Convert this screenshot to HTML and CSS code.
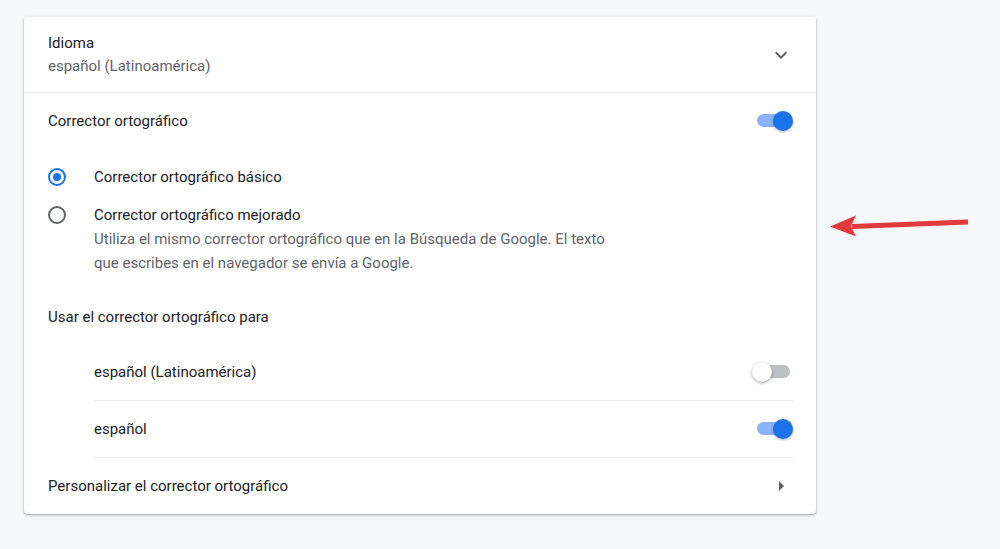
FILE: index.html
```html
<!DOCTYPE html>
<html lang="es">
<head>
  <meta charset="UTF-8" />
  <meta name="viewport" content="width=device-width, initial-scale=1.0"/>
  <title>Idiomas</title>
  <link rel="stylesheet" href="styles.css">
</head>
<body>
  <div class="card">
    <div class="row lang-row">
      <div class="lang-text">
        <div class="label">Idioma</div>
        <div class="sub">español (Latinoamérica)</div>
      </div>
      <svg class="icon" viewBox="0 0 24 24" width="24" height="24"><path d="M16.59 8.59L12 13.17 7.41 8.59 6 10l6 6 6-6z"/></svg>
    </div>

    <div class="row spell-row">
      <div class="label">Corrector ortográfico</div>
      <span class="toggle on"><span class="track"></span><span class="knob"></span></span>
    </div>

    <div class="radios">
      <div class="radio-row first">
        <span class="radio checked"></span>
        <div class="label">Corrector ortográfico básico</div>
      </div>
      <div class="radio-row">
        <span class="radio"></span>
        <div>
          <div class="label">Corrector ortográfico mejorado</div>
          <div class="sub">Utiliza el mismo corrector ortográfico que en la Búsqueda de Google. El texto<br>que escribes en el navegador se envía a Google.</div>
        </div>
      </div>
    </div>

    <div class="row">
      <div class="label">Usar el corrector ortográfico para</div>
    </div>

    <div class="sub-list">
      <div class="row item">
        <div class="label">español (Latinoamérica)</div>
        <span class="toggle"><span class="track"></span><span class="knob"></span></span>
      </div>
      <div class="row item">
        <div class="label">español</div>
        <span class="toggle on"><span class="track"></span><span class="knob"></span></span>
      </div>
    </div>

    <div class="row last">
      <div class="label">Personalizar el corrector ortográfico</div>
      <svg class="icon" viewBox="0 0 24 24" width="24" height="24"><path d="M10 17l5-5-5-5v10z"/></svg>
    </div>
  </div>

  <!-- annotation arrow drawn over the page -->
  <svg class="pointer" width="160" height="40" viewBox="820 205 160 40">
    <path d="M852 226.5 L968 222" stroke="#e03a3a" stroke-width="5" fill="none"/>
    <polygon points="830,226.5 856,215.5 851,226.3 856,236.5" fill="#e03a3a"/>
  </svg>
</body>
</html>
```

FILE: styles.css
```css
body { margin: 0; padding: 17px 0 0 24px; background: #f7f8fa; font-family: Roboto, "Liberation Sans", sans-serif; font-size: 15px; color: #202124; height: 549px; box-sizing: border-box; }
.card { width: 792px; background: #fff; border-radius: 4px; box-shadow: 0 1px 2px rgba(60,64,67,.3), 0 1px 3px 1px rgba(60,64,67,.15); padding: 0 23px 0 24px; box-sizing: border-box; }
.row { display: flex; align-items: center; justify-content: space-between; height: 55px; }
.lang-row { height: 75px; border-bottom: 1px solid #e8eaed; margin: 0 -23px 0 -24px; padding: 0 23px 0 24px; }
.lang-text .sub { margin-top: -1px; }
.label { line-height: 24px; }
.sub { color: #5f6368; line-height: 24px; }
.icon { fill: #5f6368; display: block; }
.spell-row { height: 55px; }

.radios { padding: 8px 0 14px; }
.radio-row { display: flex; align-items: flex-start; }
.radio-row.first { align-items: center; height: 41px; }
.radio-row + .radio-row { padding-top: 6px; }
.radio { width: 18px; height: 18px; border-radius: 50%; border: 2px solid #5f6368; box-sizing: border-box; margin-right: 28px; flex: none; position: relative; }
.radio-row + .radio-row .radio { margin-top: 3px; }
.radio.checked { border-color: #1a73e8; }
.radio.checked::after { content: ""; position: absolute; left: 3px; top: 3px; width: 8px; height: 8px; border-radius: 50%; background: #1a73e8; }

.sub-list { margin-left: 46px; }
.item { height: 56px; border-bottom: 1px solid #e8eaed; }
.last { height: 56px; }

.toggle { position: relative; width: 36px; height: 20px; flex: none; }
.track { position: absolute; left: 0; top: 3px; width: 33px; height: 13px; border-radius: 7px; background: #bdc1c6; }
.knob { position: absolute; top: 0; left: -5px; width: 20px; height: 20px; border-radius: 50%; background: #fff; box-shadow: 0 1px 3px rgba(0,0,0,.4); }
.toggle.on .track { background: #8ab4f8; }
.toggle.on .knob { left: auto; right: 0; background: #1a73e8; box-shadow: 0 1px 3px rgba(0,0,0,.3); }

.pointer { position: absolute; left: 820px; top: 205px; }
```
